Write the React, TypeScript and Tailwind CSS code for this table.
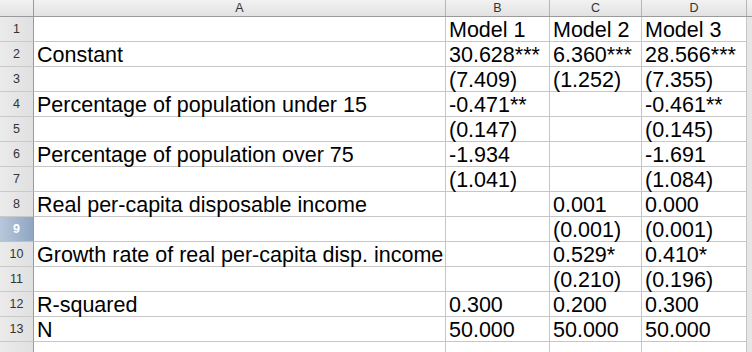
const rows: string[][] = [
  ["", "Model 1", "Model 2", "Model 3"],
  ["Constant", "30.628***", "6.360***", "28.566***"],
  ["", "(7.409)", "(1.252)", "(7.355)"],
  ["Percentage of population under 15", "-0.471**", "", "-0.461**"],
  ["", "(0.147)", "", "(0.145)"],
  ["Percentage of population over 75", "-1.934", "", "-1.691"],
  ["", "(1.041)", "", "(1.084)"],
  ["Real per-capita disposable income", "", "0.001", "0.000"],
  ["", "", "(0.001)", "(0.001)"],
  ["Growth rate of real per-capita disp. income", "", "0.529*", "0.410*"],
  ["", "", "(0.210)", "(0.196)"],
  ["R-squared", "0.300", "0.200", "0.300"],
  ["N", "50.000", "50.000", "50.000"],
  ["", "", "", ""],
];

const grid = "grid grid-cols-[34px_412px_104px_92px_105px_1fr]";

export default function App() {
  return (
    <div className="w-[752px] h-[352px] overflow-hidden bg-white font-['Liberation_Sans',Arial,sans-serif]">
      <div className={`${grid} h-[17px] bg-gradient-to-b from-[#f2f2f2] to-[#e2e2e2] border-b border-[#9a9a9a] text-[12.5px] text-[#333] leading-none`}>
        <div className="border-r border-[#9a9a9a]" />
        {["A", "B", "C", "D"].map((c) => (
          <div key={c} className="border-r border-[#b5b5b5] flex items-center justify-center">
            {c}
          </div>
        ))}
        <div />
      </div>
      {rows.map((r, i) => {
        const sel = i === 8;
        return (
          <div key={i} className={`${grid} h-[25px]`}>
            <div
              className={`border-r border-b border-[#9a9a9a] flex items-center justify-center text-[12.5px] ${
                sel
                  ? "bg-gradient-to-r from-[#b8c7da] to-[#8fa6c2] text-white font-bold border-b-[#b8c4d2]"
                  : "bg-gradient-to-r from-[#ebebeb] to-[#e0e0e0] text-[#333] border-b-[#c9c9c9]"
              }`}
            >
              {i < 13 ? i + 1 : ""}
            </div>
            {r.map((t, j) => (
              <div
                key={j}
                className="border-r border-b border-[#c6c6c6] pl-[3px] flex items-end text-[21.5px] leading-[21px] text-black whitespace-nowrap overflow-visible"
              >
                {t}
              </div>
            ))}
            <div className="bg-[#e6e6e6]" />
          </div>
        );
      })}
    </div>
  );
}
